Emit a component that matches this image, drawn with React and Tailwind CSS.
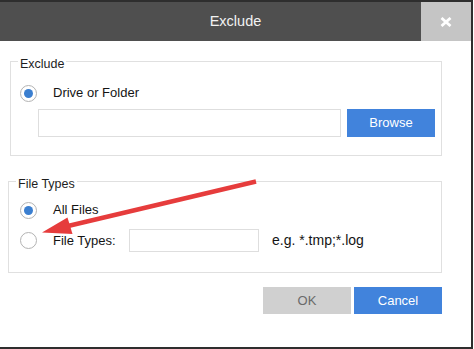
import React from 'react'

const Radio = ({ checked }) => (
  <span className="flex h-[17px] w-[17px] shrink-0 items-center justify-center rounded-full border border-[#b3b3b3] bg-white">
    {checked && <span className="h-[9px] w-[9px] rounded-full bg-[#3b7fd0]" />}
  </span>
)

const Group = ({ title, className, children }) => (
  <div className={`relative self-end border border-[#e0e0e0] ${className}`}>
    <span className="absolute left-[7px] top-[-6px] bg-white px-[2px] text-[12.5px] leading-[16px] text-[#1e1e1e]">
      {title}
    </span>
    {children}
  </div>
)

const App = () => {
  return (
    <div className="relative h-[349px] w-[474px] bg-white font-['Liberation_Sans',Arial,sans-serif]">
      <div className="flex h-[349px] w-[473px] flex-col border-t-2 border-r-2 border-b-2 border-[#2e2e2e] bg-white">
        {/* title bar */}
        <div className="flex h-[39px] shrink-0 bg-[#4f4f4f]">
          <div className="flex flex-1 items-center justify-center pl-[50px] text-[14.5px] text-[#f2f2f2]">Exclude</div>
          <button className="flex w-[50px] items-center justify-center bg-[#c5c5c5]">
            <svg width="12" height="10" viewBox="0 0 12 10">
              <path d="M1.5 1 L10.5 9 M10.5 1 L1.5 9" stroke="#fff" strokeWidth="2.8" />
            </svg>
          </button>
        </div>

        <div className="flex w-[442px] flex-col text-[13px] text-[#141414]">
          <Group title="Exclude" className="mt-[20px] w-[432px] pt-[22px] pl-[9px] pr-[6px] pb-[18px]">
            <div className="flex h-[18px] items-center gap-[16px]">
              <Radio checked />
              <span>Drive or Folder</span>
            </div>
            <div className="mt-[7px] ml-[18px] flex h-[28px] gap-[6px]">
              <input className="h-[28px] w-[303px] border border-[#dedede] bg-white px-2 outline-none" />
              <button className="h-[28px] w-[88px] bg-[#4183dc] text-[13px] text-white">Browse</button>
            </div>
          </Group>

          <Group title="File Types" className="mt-[25px] w-[434px] pt-[19px] pl-[11px] pb-[20px]">
            <div className="flex h-[18px] items-center gap-[16px]">
              <Radio checked />
              <span>All Files</span>
            </div>
            <div className="mt-[10px] flex h-[23px] items-center">
              <Radio />
              <span className="ml-[16px] w-[76px]">File Types:</span>
              <input className="h-[23px] w-[130px] border border-[#dedede] bg-white px-2 outline-none" />
              <span className="ml-[13px] text-[14px]">e.g. *.tmp;*.log</span>
            </div>
          </Group>

          <div className="mt-[14px] flex justify-end gap-[3px] text-[13px]">
            <button className="h-[27px] w-[88px] bg-[#d0d0d0] text-[#6a6a6a]">OK</button>
            <button className="h-[27px] w-[88px] bg-[#4183dc] text-white">Cancel</button>
          </div>
        </div>
      </div>

      {/* annotation arrow */}
      <svg className="pointer-events-none absolute left-0 top-0" width="474" height="349" viewBox="0 0 474 349">
        <line x1="256" y1="181.5" x2="68" y2="226" stroke="#e63c3c" strokeWidth="4.5" />
        <polygon points="42,232.5 72.5,234 67.5,217.5" fill="#e63c3c" />
      </svg>
    </div>
  )
}

export default App
